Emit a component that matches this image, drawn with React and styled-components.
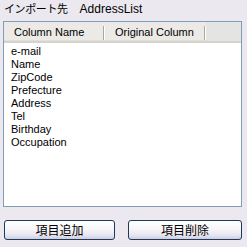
import styled, { createGlobalStyle } from "styled-components";

const GlobalStyle = createGlobalStyle`
	html, body {
		margin: 0;
		padding: 0;
		background: #ebe8ef;
	}
	body {
		font-family: "Liberation Sans", "Noto Sans CJK JP", sans-serif;
		font-size: 11px;
		color: #000;
	}
`;

const Panel = styled.div`
	width: 247px;
	height: 247px;
	box-sizing: border-box;
	padding: 2px 5px 7px 3px;
	display: flex;
	flex-direction: column;
	background: #ebe8ef;
`;

const Title = styled.div`
	height: 19px;
	line-height: 15px;
	padding-left: 1px;
	font-size: 12px;
	white-space: nowrap;
`;

const TitleKana = styled.span`
	font-size: 11px;
	letter-spacing: -0.4px;
`;

const TitleName = styled.span`
	margin-left: 12px;
`;

const ListBox = styled.div`
	flex: 1;
	background: #fff;
	border: 1px solid #7f9db9;
	display: flex;
	flex-direction: column;
	min-height: 0;
`;

const Header = styled.div`
	display: flex;
	height: 19px;
	background: #ebeae6;
	border-bottom: 2px solid #d6d3cc;
	box-shadow: inset 0 -1px 0 #e2dfd8;
`;

const HeaderCell = styled.div`
	width: ${p => p.$w}px;
	flex: ${p => (p.$fill ? 1 : "none")};
	box-sizing: border-box;
	padding-left: 10px;
	line-height: 20px;
	position: relative;
	white-space: nowrap;
	overflow: hidden;
	background: ${p => (p.$fill ? "#e4e4e2" : "transparent")};
	&::after {
		content: "";
		display: ${p => (p.$fill ? "none" : "block")};
		position: absolute;
		right: 1px;
		top: 4px;
		width: 1px;
		height: 14px;
		background: #aca899;
		box-shadow: 1px 0 0 #fff;
	}
`;

const Rows = styled.div`
	padding: 2px 0 0 7px;
`;

const Row = styled.div`
	height: 13px;
	line-height: 13px;
`;

const ButtonBar = styled.div`
	display: flex;
	justify-content: space-between;
	margin-top: 13px;
	padding-left: 1px;
`;

const Button = styled.button`
	width: ${p => p.$w}px;
	height: 20px;
	box-sizing: border-box;
	border: 1px solid #1c3a5c;
	border-radius: 3px;
	background: linear-gradient(#ffffff 0%, #f7f6f9 45%, #e6e4ee 80%, #cfcce0 100%);
	font-family: "Noto Sans CJK JP", sans-serif;
	font-size: 12px;
	line-height: 16px;
	padding: 0;
	color: #000;
`;

const columns = ["e-mail", "Name", "ZipCode", "Prefecture", "Address", "Tel", "Birthday", "Occupation"];

export default function App() {
	return (
		<>
			<GlobalStyle />
			<Panel>
				<Title>
					<TitleKana>インポート先</TitleKana>
					<TitleName>AddressList</TitleName>
				</Title>
				<ListBox>
					<Header>
						<HeaderCell $w={101}>Column Name</HeaderCell>
						<HeaderCell $w={101}>Original Column</HeaderCell>
						<HeaderCell $fill />
					</Header>
					<Rows>
						{columns.map(name => (
							<Row key={name}>{name}</Row>
						))}
					</Rows>
				</ListBox>
				<ButtonBar>
					<Button $w={111}>項目追加</Button>
					<Button $w={114}>項目削除</Button>
				</ButtonBar>
			</Panel>
		</>
	);
}
